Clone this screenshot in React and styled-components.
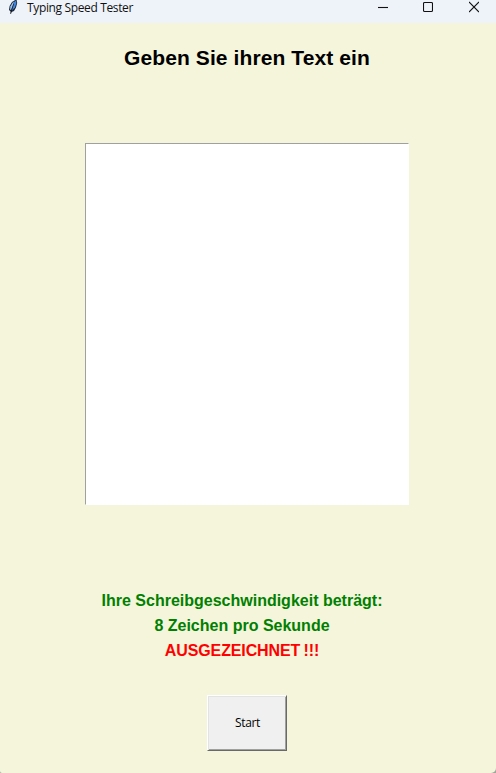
import React from 'react';
import styled, { createGlobalStyle } from 'styled-components';

const GlobalStyle = createGlobalStyle`
  * { box-sizing: border-box; }
  html, body { margin: 0; overflow: hidden; background: #a5a59c; }
`;

const Window = styled.main`
  width: 496px;
  height: 773px;
  display: flex;
  flex-direction: column;
  overflow: hidden;
  background: #f5f5dc;
  border-radius: 0 0 5px 2px;
`;

const TitleBar = styled.header`
  height: 23px;
  flex: none;
  display: flex;
  align-items: flex-start;
  padding-left: 7px;
  background: #eef3fa;
`;

const WindowTitle = styled.span`
  flex: 1;
  margin-left: 7px;
  font: 12px/16px 'Open Sans', sans-serif;
  letter-spacing: -0.36px;
  color: #111;
  white-space: nowrap;
`;

const WindowButtons = styled.div`
  display: flex;
`;

const WindowButton = styled.button`
  width: 45px;
  height: 15px;
  padding: 0;
  border: 0;
  display: flex;
  justify-content: center;
  background: transparent;

  &:last-child {
    width: 46px;
    padding-left: 2px;
  }
`;

const Content = styled.section`
  flex: 1;
  display: flex;
  flex-direction: column;
  align-items: center;
  padding-right: 2px;
`;

const Heading = styled.h1`
  margin: 22px 0 0;
  font: bold 21px/26px 'Liberation Sans', Arial, sans-serif;
  letter-spacing: 0.1px;
  color: #000;
  white-space: nowrap;
`;

const TextArea = styled.textarea`
  display: block;
  width: 324px;
  height: 362px;
  margin: 72px 0 0;
  padding: 4px;
  resize: none;
  outline: none;
  border: 1px solid;
  border-color: #a0a0a0 #fff #fff #a0a0a0;
  border-radius: 0;
  background: #fff;
`;

const Results = styled.div`
  margin: 83px 10px 0 0;
  display: flex;
  flex-direction: column;
  align-items: center;
`;

const ResultLine = styled.p`
  margin: 0;
  font: bold 16px/25px 'Liberation Sans', Arial, sans-serif;
  letter-spacing: ${({ $alert }) => ($alert ? '-0.12px' : '0')};
  word-spacing: ${({ $alert }) => ($alert ? '-1px' : '0')};
  color: ${({ $alert }) => ($alert ? '#ff0000' : '#008000')};
  white-space: nowrap;
`;

const StartButton = styled.button`
  width: 80px;
  height: 56px;
  margin: 32px 0 0;
  padding: 0 0 0 1px;
  border: 1px solid;
  border-color: #fff #696969 #696969 #fff;
  border-radius: 0;
  box-shadow: inset 1px 1px #e3e3e3, inset -1px -1px #a0a0a0;
  background: #f0f0f0;
  font: 12px/16px 'Open Sans', sans-serif;
  letter-spacing: -0.35px;
  color: #000;
`;

const FeatherIcon = () => (
  <svg width="13" height="16" viewBox="0 0 13 16">
    <path d="M3.6 14V11.5L2 10 2.6 6 5 2 9.5-.8 10.2 3 9 7.5 7 11 4.6 12z" fill="#1c2635" />
    <path d="M3 9.6 3.5 6.3 5.6 2.8 7 1.6 5.6 6 4.2 10z" fill="#9cc4f2" />
    <path d="M5.8 6.6 7.2 2 9.2.2 9.3 3.2 8 7.2 5.1 10.6z" fill="#3f86e0" />
    <path d="M6.8 4 4.8 9 3.6 14" fill="none" stroke="#111" strokeWidth=".6" />
  </svg>
);

const controls = [
  { name: 'Minimieren', shape: <path d="M0 7.5H10" /> },
  { name: 'Maximieren', shape: <rect x=".5" y="2.5" width="9" height="9" rx="1" /> },
  { name: 'Schließen', shape: <path d="M0 2 10 12M10 2 0 12" /> },
];

export default function App() {
  return (
    <>
      <GlobalStyle />
      <Window>
        <TitleBar>
          <FeatherIcon />
          <WindowTitle>Typing Speed Tester</WindowTitle>
          <WindowButtons>
            {controls.map(({ name, shape }) => (
              <WindowButton key={name} aria-label={name}>
                <svg width="10" height="14" viewBox="0 0 10 14" fill="none" stroke="#111" strokeWidth="1.1">
                  {shape}
                </svg>
              </WindowButton>
            ))}
          </WindowButtons>
        </TitleBar>
        <Content>
          <Heading>Geben Sie ihren Text ein</Heading>
          <TextArea />
          <Results>
            <ResultLine>Ihre Schreibgeschwindigkeit beträgt:</ResultLine>
            <ResultLine>8 Zeichen pro Sekunde</ResultLine>
            <ResultLine $alert>AUSGEZEICHNET !!!</ResultLine>
          </Results>
          <StartButton>Start</StartButton>
        </Content>
      </Window>
    </>
  );
}
